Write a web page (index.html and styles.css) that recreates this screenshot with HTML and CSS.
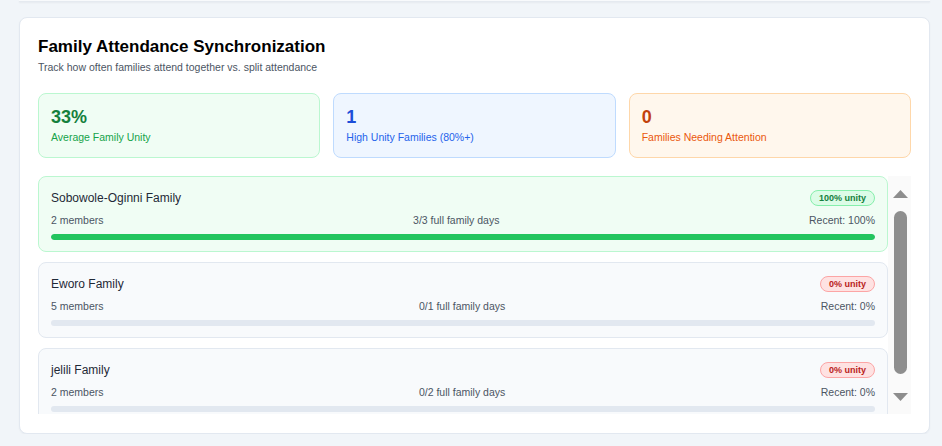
FILE: index.html
```html
<!DOCTYPE html>
<html>
<head>
<meta charset="utf-8">
<link rel="stylesheet" href="styles.css">
</head>
<body>
<div class="page">
  <div class="prev-card"></div>
  <section class="card">
    <h2 class="title">Family Attendance Synchronization</h2>
    <p class="subtitle">Track how often families attend together vs. split attendance</p>
    <div class="stats">
      <div class="stat stat-green">
        <div class="stat-num">33%</div>
        <div class="stat-label">Average Family Unity</div>
      </div>
      <div class="stat stat-blue">
        <div class="stat-num">1</div>
        <div class="stat-label">High Unity Families (80%+)</div>
      </div>
      <div class="stat stat-orange">
        <div class="stat-num">0</div>
        <div class="stat-label">Families Needing Attention</div>
      </div>
    </div>
    <div class="list">
      <div class="items">
        <div class="family family-good">
          <div class="fam-head">
            <span class="fam-name">Sobowole-Oginni Family</span>
            <span class="badge badge-green">100% unity</span>
          </div>
          <div class="fam-row">
            <span>2 members</span>
            <span>3/3 full family days</span>
            <span>Recent: 100%</span>
          </div>
          <div class="bar"><div class="bar-fill" style="width:100%"></div></div>
        </div>
        <div class="family">
          <div class="fam-head">
            <span class="fam-name">Eworo Family</span>
            <span class="badge badge-red">0% unity</span>
          </div>
          <div class="fam-row">
            <span>5 members</span>
            <span>0/1 full family days</span>
            <span>Recent: 0%</span>
          </div>
          <div class="bar"><div class="bar-fill" style="width:0%"></div></div>
        </div>
        <div class="family">
          <div class="fam-head">
            <span class="fam-name">jelili Family</span>
            <span class="badge badge-red">0% unity</span>
          </div>
          <div class="fam-row">
            <span>2 members</span>
            <span>0/2 full family days</span>
            <span>Recent: 0%</span>
          </div>
          <div class="bar"><div class="bar-fill" style="width:0%"></div></div>
        </div>
      </div>
      <div class="scrollbar" aria-hidden="true">
        <svg class="arrow" width="15" height="8" viewBox="0 0 15 8"><polygon points="7.5,0 15,8 0,8" fill="#8d8d8d"/></svg>
        <div class="thumb"></div>
        <svg class="arrow arrow-down" width="15" height="8" viewBox="0 0 15 8"><polygon points="0,0 15,0 7.5,8" fill="#8d8d8d"/></svg>
      </div>
    </div>
  </section>
</div>
</body>
</html>
```

FILE: styles.css
```css
* { box-sizing: border-box; }
html, body {
  margin: 0;
  padding: 0;
  background: #f1f5f9;
  font-family: "Liberation Sans", Arial, sans-serif;
  overflow: hidden;
}
.page {
  padding: 0 12px 0 19px;
}
.prev-card {
  height: 2px;
  background: #f8fafc;
  border-bottom: 1px solid #e5eaf0;
  box-shadow: 0 1px 2px rgba(15, 23, 42, 0.05);
  margin-bottom: 15px;
}
.card {
  background: #ffffff;
  border: 1px solid #e2e8f0;
  border-radius: 8px;
  box-shadow: 0 1px 2px rgba(15, 23, 42, 0.04);
  padding: 18px 18px 19px 18px;
  height: 417px;
}
.title {
  margin: 0;
  font-size: 17px;
  font-weight: 700;
  color: #000;
  line-height: 22px;
}
.subtitle {
  margin: 2px 0 0 0;
  font-size: 10.5px;
  color: #4b5563;
  line-height: 14px;
}
.stats {
  display: grid;
  grid-template-columns: 1fr 1fr 1fr;
  gap: 13px;
  margin-top: 19px;
}
.stat {
  border: 1px solid;
  border-radius: 8px;
  padding: 11px 12px 12px 12px;
  height: 65px;
}
.stat-num {
  font-size: 18px;
  font-weight: 700;
  line-height: 24px;
}
.stat-label {
  font-size: 10.5px;
  line-height: 16px;
}
.stat-green { background: #f0fdf4; border-color: #bbf7d0; }
.stat-green .stat-num { color: #15803d; }
.stat-green .stat-label { color: #16a34a; }
.stat-blue { background: #eff6ff; border-color: #bfdbfe; }
.stat-blue .stat-num { color: #1d4ed8; }
.stat-blue .stat-label { color: #2563eb; }
.stat-orange { background: #fff7ed; border-color: #fed7aa; }
.stat-orange .stat-num { color: #c2410c; }
.stat-orange .stat-label { color: #ea580c; }

.list {
  margin-top: 18px;
  height: 238px;
  display: flex;
}
.items {
  flex: 1;
  min-width: 0;
  overflow: hidden;
  display: flex;
  flex-direction: column;
  gap: 10px;
}
.scrollbar {
  flex: none;
  width: 23px;
  background: #fafafa;
  display: flex;
  flex-direction: column;
  align-items: center;
  padding-top: 14px;
}
.arrow {
  display: block;
  flex: none;
  margin-left: 1px;
}
.thumb {
  flex: none;
  width: 13px;
  height: 163px;
  margin-top: 13px;
  margin-left: 1px;
  border-radius: 7px;
  background: #8e8e8e;
}
.arrow-down {
  margin-top: 19px;
}
.family {
  flex: none;
  background: #f8fafc;
  border: 1px solid #e2e8f0;
  border-radius: 8px;
  padding: 12px 12px 11px 12px;
}
.family-good {
  background: #f0fdf4;
  border-color: #bbf7d0;
}
.fam-head {
  display: flex;
  justify-content: space-between;
  align-items: center;
  height: 18px;
}
.fam-name {
  font-size: 12px;
  color: #1f2937;
}
.badge {
  font-size: 9px;
  font-weight: 700;
  border: 1px solid;
  border-radius: 9px;
  padding: 1px 8px;
  line-height: 12px;
}
.badge-green { background: #dcfce7; border-color: #86efac; color: #15803d; }
.badge-red { background: #fee2e2; border-color: #fca5a5; color: #b91c1c; }
.fam-row {
  display: flex;
  justify-content: space-between;
  font-size: 10.5px;
  color: #4b5563;
  line-height: 13px;
  margin-top: 7px;
}
.bar {
  margin-top: 7px;
  height: 6px;
  border-radius: 3px;
  background: #e2e8f0;
  overflow: hidden;
}
.bar-fill {
  height: 100%;
  background: #22c55e;
  border-radius: 3px;
}
```
